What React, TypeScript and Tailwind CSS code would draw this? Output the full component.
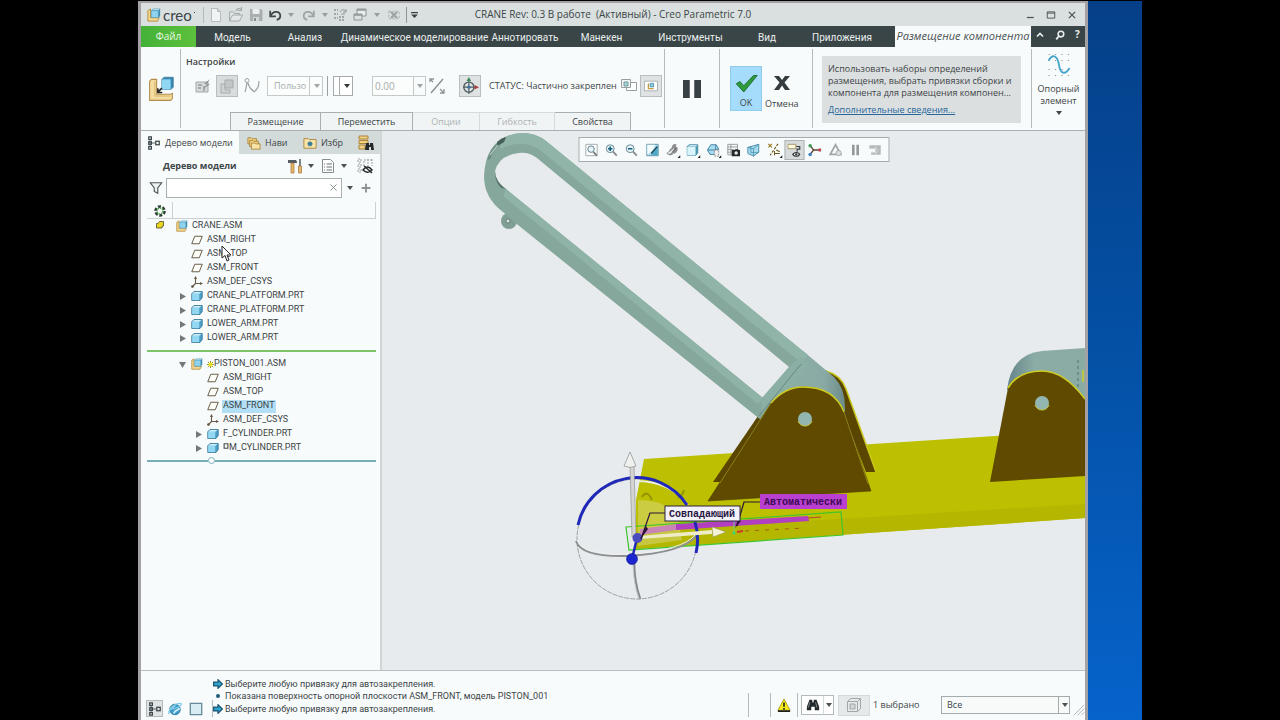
import { useState, type ReactNode } from 'react'
import clsx from 'clsx'

type TreeItem = {
  name: string
  kind: 'asm' | 'plane' | 'csys' | 'part'
  level: number
  mark?: 'new' | 'packed'
}

const MENU = [
  { label: 'Модель', width: 'w-[73px]' },
  { label: 'Анализ', width: 'w-[72px]' },
  { label: 'Динамическое моделирование', width: 'w-[147px]' },
  { label: 'Аннотировать', width: 'w-[74px]' },
  { label: 'Манекен', width: 'w-[79px]' },
  { label: 'Инструменты', width: 'w-[99px]' },
  { label: 'Вид', width: 'w-[54px]' },
  { label: 'Приложения', width: 'w-[96px]' },
]

const PANELS = [
  { label: 'Размещение', width: 'w-[91px]' },
  { label: 'Переместить', width: 'w-[92px]' },
  { label: 'Опции', width: 'w-[67px]', disabled: true },
  { label: 'Гибкость', width: 'w-[75px]', disabled: true },
  { label: 'Свойства', width: 'w-[76px]' },
]

const CRANE: TreeItem[] = [
  { name: 'CRANE.ASM', kind: 'asm', level: 0 },
  { name: 'ASM_RIGHT', kind: 'plane', level: 1 },
  { name: 'ASM_TOP', kind: 'plane', level: 1 },
  { name: 'ASM_FRONT', kind: 'plane', level: 1 },
  { name: 'ASM_DEF_CSYS', kind: 'csys', level: 1 },
  { name: 'CRANE_PLATFORM.PRT', kind: 'part', level: 1 },
  { name: 'CRANE_PLATFORM.PRT', kind: 'part', level: 1 },
  { name: 'LOWER_ARM.PRT', kind: 'part', level: 1 },
  { name: 'LOWER_ARM.PRT', kind: 'part', level: 1 },
]

const PISTON: TreeItem[] = [
  { name: 'PISTON_001.ASM', kind: 'asm', level: 1, mark: 'new' },
  { name: 'ASM_RIGHT', kind: 'plane', level: 2 },
  { name: 'ASM_TOP', kind: 'plane', level: 2 },
  { name: 'ASM_FRONT', kind: 'plane', level: 2 },
  { name: 'ASM_DEF_CSYS', kind: 'csys', level: 2 },
  { name: 'F_CYLINDER.PRT', kind: 'part', level: 2 },
  { name: 'M_CYLINDER.PRT', kind: 'part', level: 2, mark: 'packed' },
]

function Icon({ children, className = 'size-4' }: { children: ReactNode; className?: string }) {
  return (
    <svg viewBox="0 0 16 16" fill="none" aria-hidden="true" className={clsx('shrink-0', className)}>
      {children}
    </svg>
  )
}

function Caret({ className = 'text-[#4a5254]' }: { className?: string }) {
  return (
    <svg viewBox="0 0 6 4" aria-hidden="true" className={clsx('h-1 w-1.5 shrink-0', className)}>
      <path d="M0 0h6L3 4z" fill="currentColor" />
    </svg>
  )
}

/* ---------- icons ---------- */

const AsmIcon = ({ className }: { className?: string }) => (
  <Icon className={className}>
    <path d="M1 3l3-2v10h10l-2 4H1z" fill="#f3d58e" stroke="#b28a3c" />
    <path d="M5 3l2-2h8l-2 2z" fill="#c6ebf8" stroke="#3b8db0" strokeWidth=".6" />
    <path d="M5 3h8v8H5z" fill="#8fd3ee" stroke="#3b8db0" strokeWidth=".6" />
    <path d="M13 3l2-2v8l-2 2z" fill="#3f8db3" />
  </Icon>
)

const PartIcon = () => (
  <Icon className="size-3">
    <path d="M1 5l3-3h11v8l-3 4H1z" fill="#4b9fc4" stroke="#2d6f92" strokeLinejoin="round" />
    <path d="M1.500 5H11v8.500H1.500z" fill="#93d8f2" />
    <path d="M1.500 5l3-2.500H14L11 5z" fill="#cdeffb" />
  </Icon>
)

const PlaneIcon = () => (
  <Icon className="size-3">
    <path d="M5 3h10l-4 10H1z" fill="#fdfdf8" stroke="#665a46" strokeWidth="1.300" />
  </Icon>
)

const CsysIcon = () => (
  <Icon className="size-3">
    <path d="M6 1v9h9M6 10l-5 5" stroke="#665a46" strokeWidth="1.500" />
    <path d="M4 4l2-4 2 4zM12 8l4 2-4 2z" fill="#665a46" />
    <circle cx="2" cy="14" r="1.800" fill="#665a46" />
  </Icon>
)

const TreeGlyph = () => (
  <Icon className="size-3.5">
    <g stroke="#394347" strokeWidth="1.400">
      <path d="M3.500 5v6M5 8h4" strokeWidth="1" />
      <rect x="2" y="1" width="3" height="3" />
      <rect x="2" y="6.500" width="3" height="3" />
      <rect x="2" y="12" width="3" height="3" />
      <rect x="10" y="6" width="4" height="4" />
    </g>
  </Icon>
)

const Binoculars = ({ className }: { className?: string }) => (
  <Icon className={className}>
    <path d="M4 2h3l.5 3h1L9 2h3l3 8v4h-5v-4H6v4H1v-4z" fill="#23282a" />
    <path d="M4.500 5l-2 6M11 5l1.500 6" stroke="#8b9598" />
  </Icon>
)

const MsgArrow = () => (
  <Icon className="size-2.5">
    <path d="M1 5h7V1l7 7-7 7v-4H1z" fill="#2fa3cf" stroke="#17506c" strokeWidth="1.800" />
  </Icon>
)

const NewFile = () => (
  <Icon>
    <path d="M3.500 1.500h6l3 3v10h-9zM9.500 1.500v3h3" fill="#f1f4f4" stroke="#b5bbbc" />
  </Icon>
)

const OpenFile = () => (
  <Icon>
    <path d="M1.500 14V5h4l1 1.500h5V8M1.500 14l3-6h10l-3 6z" fill="#e3e7e7" stroke="#a3a9aa" />
    <path d="M8 4c1-2.500 3-3 5-2M13.500 0v3.500h-3.500" stroke="#a3a9aa" strokeWidth="1.200" />
  </Icon>
)

const SaveFile = () => (
  <Icon>
    <path d="M2 2h11l1.500 1.500V14H2z" fill="#a9afb0" />
    <path d="M4.500 2h7v5h-7z" fill="#e9eded" />
    <path d="M5 10h6v4H5z" fill="#d2d7d8" />
    <path d="M6 11h2v3H6z" fill="#868d8f" />
  </Icon>
)

const Undo = ({ color = '#3e474a', flip = false }: { color?: string; flip?: boolean }) => (
  <Icon className={clsx('size-3.5', flip && '-scale-x-100')}>
    <path d="M2.500 3v6.500H9" stroke={color} strokeWidth="2" />
    <path d="M3 9c2.500-6 10-6 11-1 .4 3-1.500 5-4 5.500" stroke={color} strokeWidth="2" />
  </Icon>
)

const Regenerate = () => (
  <Icon>
    <path d="M2 3h4M2 7h4M2 11h4M7 10h6M7 13h6" stroke="#9fa6a7" strokeWidth="2" strokeDasharray="2 1" />
    <path d="M8 5c1-3 5-3 6 0M14 2v3h-3M9 7h4" stroke="#8f9698" />
  </Icon>
)

const Windows = () => (
  <Icon>
    <path d="M5 2h9v7H5z" fill="#e9eded" stroke="#8d9496" />
    <path d="M2 7h8v6H2z" fill="#dce1e2" stroke="#8d9496" />
    <path d="M5 3h9M2 8h8" stroke="#8d9496" strokeWidth="1.500" />
  </Icon>
)

const CloseWin = () => (
  <Icon className="size-3">
    <path d="M1 3h14v10H1z" stroke="#9da4a5" strokeDasharray="3 2" />
    <path d="M4 4l8 8M12 4l-8 8" stroke="#9da4a5" strokeWidth="3" />
  </Icon>
)

const magnifier = (
  <>
    <path d="M9.500 9.500L14 14.500" stroke="#888b8c" strokeWidth="2" />
    <circle cx="6.500" cy="6.500" r="4.500" fill="#e4f3f8" stroke="#5e7c88" />
  </>
)

const VIEW_TOOLS: { title: string; more?: boolean; pressed?: boolean; art: ReactNode }[] = [
  {
    title: 'Вписать',
    art: (
      <>
        <path d="M1.500 1.500h13v13h-13z" fill="#fff" stroke="#9aa5a8" />
        <path d="M10 10l4 4.500" stroke="#777" strokeWidth="2" />
        <circle cx="7.500" cy="7" r="3.700" fill="#e4f3f8" stroke="#4e7382" />
      </>
    ),
  },
  {
    title: 'Увеличить',
    art: (
      <>
        {magnifier}
        <path d="M4 6.500h5M6.500 4v5" stroke="#16607f" strokeWidth="1.800" />
      </>
    ),
  },
  {
    title: 'Уменьшить',
    art: (
      <>
        {magnifier}
        <path d="M4 6.500h5" stroke="#16607f" strokeWidth="1.800" />
      </>
    ),
  },
  {
    title: 'Перерисовать',
    art: (
      <>
        <path d="M1.500 1.500h13v13h-13z" fill="#b4e0ec" stroke="#568ea6" />
        <path d="M2 2h9c-2 6-5 9-9 11z" fill="#f4fbfd" />
        <path d="M14 4v10H6z" fill="#4fa9c6" />
        <path d="M13.500 4l-7 8" stroke="#103c50" strokeWidth="1.400" />
      </>
    ),
  },
  {
    title: 'Параметры рендеринга',
    more: true,
    art: (
      <>
        <path d="M1 11c4 0 3-5 6-5 0-4 3-6 6-4-2 1-1 3 1 3 0 6-3 7-5 7-2 3-6 3-8-1z" fill="#8d8f90" />
        <path d="M3 12c4-1 5-4 7-5" stroke="#efefef" strokeWidth="1.800" />
        <path d="M8 10l4-4" stroke="#5d6061" strokeWidth="1.200" />
      </>
    ),
  },
  {
    title: 'Стиль отображения',
    more: true,
    art: (
      <>
        <path d="M2 4l2-2h10v9l-2 3H2z" fill="#4a96b4" stroke="#4a8ba5" />
        <path d="M2 4.500h9.500V14H2z" fill="#d9f4fc" />
        <path d="M2.500 4l2-1.500h9L12 4z" fill="#f3fcff" />
      </>
    ),
  },
  {
    title: 'Сохраненные ориентации',
    more: true,
    art: (
      <>
        <path d="M5 2h6l3 5-3 6H4L1 8z" fill="#a9ddef" stroke="#34789a" />
        <path d="M1.500 8H10l3-1M10 8l1-6" stroke="#34789a" />
        <path d="M9 8h5v7H9z" fill="#eee" stroke="#888" strokeDasharray="2 1" />
      </>
    ),
  },
  {
    title: 'Менеджер видов',
    art: (
      <>
        <path d="M1.500 1.500h11v12h-11zM1.500 4.500h11M1.500 7.500h7M1.500 10.500h5M5 1.500v12" fill="#fafafa" stroke="#8b9294" />
        <path d="M6 8h3l1-1h3l1 1h1.500v7H6z" fill="#23282a" />
        <circle cx="11" cy="11.500" r="2" fill="#e8e8e8" />
      </>
    ),
  },
  {
    title: 'Перспектива',
    art: (
      <>
        <path d="M1.500 5L14 1.500v9L8 15l-6.500-3z" fill="#a6dbee" stroke="#3e86a5" />
        <path d="M1.500 5L8 6.500 14 1.500M8 6.500V15M5 4v7l9 0" stroke="#3e86a5" strokeWidth=".8" />
      </>
    ),
  },
  {
    title: 'Фильтры отображения опор',
    more: true,
    art: (
      <>
        <path d="M1 1l4 4M5 1L1 5" stroke="#947313" strokeWidth="1.200" />
        <path d="M12 1L3 14" stroke="#6b5518" strokeWidth="1.300" strokeDasharray="3 1.500" />
        <path d="M8 9v5M8 12h6M10 8l4 2" stroke="#6b5518" strokeWidth="1.200" />
      </>
    ),
  },
  {
    title: 'Отображение аннотаций',
    pressed: true,
    art: (
      <>
        <path d="M.5 1.500h9v5h-9z" fill="#fffbe3" stroke="#a48d53" />
        <path d="M10 4h4v3h-3v3" stroke="#333b3e" strokeWidth="1.300" />
        <path d="M6 13c2-3 6-3 8 0-2 3-6 3-8 0z" fill="#fff" stroke="#222a2d" strokeWidth="1.200" />
        <circle cx="10" cy="13" r="1.300" fill="#222a2d" />
      </>
    ),
  },
  {
    title: 'Центр вращения',
    art: (
      <>
        <path d="M3 3l4 5-4 5M7 8h7" stroke="#5c4438" strokeWidth="1.600" />
        <circle cx="3" cy="3" r="2" fill="#3f9a55" />
        <circle cx="3" cy="13" r="2" fill="#397fc0" />
        <circle cx="14" cy="8" r="2" fill="#c04a55" />
      </>
    ),
  },
  {
    title: 'Моделирование',
    art: (
      <>
        <path d="M8 2l6 11H2z" stroke="#a2a6a7" strokeWidth="2" />
        <circle cx="11.500" cy="11.500" r="3" fill="#dcdfe0" stroke="#a2a6a7" />
      </>
    ),
  },
  { title: 'Пауза', art: <path d="M4 2h3v12H4zM9 2h3v12H9z" fill="#939899" /> },
  {
    title: 'Возобновить',
    art: (
      <>
        <path d="M1 2.500h13v11H3v-3h5v-4H1z" fill="#b6babb" />
        <path d="M1 6.500h7v-2l3 4-3 4v-2H3" stroke="#d9dcdd" />
      </>
    ),
  },
]

/* ---------- title and menu ---------- */

function TitleBar() {
  return (
    <header className="relative flex h-[23px] shrink-0 items-center bg-[#d9e0df]">
      <div className="flex w-[63px] items-center gap-0.5 border-r border-[#b3babb] pl-1.5">
        <AsmIcon className="size-3.5" />
        <span className="font-[Lato] text-[15px] leading-4 text-[#394347]">creo</span>
        <span className="mb-1 size-px bg-[#394347]" />
      </div>
      <div className="flex items-center gap-1 pl-1">
        <button aria-label="Создать"><NewFile /></button>
        <button aria-label="Открыть"><OpenFile /></button>
        <button aria-label="Сохранить"><SaveFile /></button>
        <button aria-label="Отменить" className="flex items-center gap-1.5"><Undo /><Caret className="text-[#969d9f]" /></button>
        <button aria-label="Повторить" className="ml-1 flex items-center gap-1.5"><Undo color="#9da4a5" flip /><Caret className="text-[#969d9f]" /></button>
        <button aria-label="Регенерировать"><Regenerate /></button>
        <button aria-label="Окна" className="flex items-center gap-1.5"><Windows /><Caret className="text-[#969d9f]" /></button>
        <button aria-label="Закрыть окно модели" className="ml-1"><CloseWin /></button>
        <button aria-label="Настроить панель" className="ml-0.5 flex h-4 items-center border-l border-[#8f9698] pl-1">
          <svg viewBox="0 0 8 7" className="h-1.5 w-[7px]" aria-hidden="true">
            <path d="M0 0h8v1.500H0zM0 3h8L4 7z" fill="#394347" />
          </svg>
        </button>
      </div>
      <h1 className="pointer-events-none absolute inset-x-0 text-center text-[10px] text-[#3c4547]">
        CRANE Rev: 0.3 В работе &nbsp;(Активный) - Creo Parametric 7.0
      </h1>
      <div className="ml-auto flex items-center gap-[11px] pr-2 text-[#4b5557]">
        <button aria-label="Свернуть"><Icon className="size-2.5"><path d="M3 12h11" stroke="currentColor" strokeWidth="2" /></Icon></button>
        <button aria-label="Развернуть"><Icon className="size-2.5"><path d="M2 3h12v10H2zM2 5h12" stroke="currentColor" strokeWidth="1.500" /></Icon></button>
        <button aria-label="Закрыть"><Icon className="size-2.5"><path d="M3 3l10 10M13 3L3 13" stroke="currentColor" strokeWidth="2" /></Icon></button>
      </div>
    </header>
  )
}

function MenuBar() {
  return (
    <nav className="flex h-[21px] shrink-0 bg-[#3a4547] text-[10px] whitespace-nowrap text-[#e9eeee]">
      <button className="w-[55px] bg-gradient-to-r from-[#43b138] to-[#5cc13c] text-[#eaf8e4]">Файл</button>
      {MENU.map(item => (
        <button key={item.label} className={clsx("flex items-center justify-center pt-px font-['Roboto',sans-serif]", item.width)}>
          {item.label}
        </button>
      ))}
      <button className="ml-auto flex w-[136px] items-center justify-center bg-[#f8fbfb] text-[11px] text-[#4a5254] italic">
        Размещение компонента
      </button>
      <div className="flex w-[54px] items-center justify-around pb-1">
        <button aria-label="Свернуть ленту"><Icon className="size-2"><path d="M2 11l6-6 6 6" stroke="currentColor" strokeWidth="3.500" /></Icon></button>
        <button aria-label="Поиск команд">
          <Icon className="size-2.5">
            <circle cx="9.500" cy="6.500" r="4.500" stroke="currentColor" strokeWidth="2.500" />
            <path d="M6 10l-4 5" stroke="currentColor" strokeWidth="3" />
          </Icon>
        </button>
        <button aria-label="Справка" className="font-bold">?</button>
      </div>
    </nav>
  )
}

/* ---------- ribbon ---------- */

function Ribbon() {
  return (
    <section className="flex h-[84px] shrink-0 border-b border-[#a9b0b2] bg-[#f8fbfb] text-[9px] text-[#3c4547]">
      <div className="my-0.5 flex w-10 shrink-0 items-center justify-center border-r border-[#b5bbbd]">
        <Icon className="size-7">
          <path d="M1.500 3.500l1-1H5.500V11h8l1-.5v3l-1 1h-12z" fill="#f5dda0" stroke="#b48d4b" strokeWidth=".6" />
          <path d="M4.500 3.500V12h9" stroke="#d2ae68" strokeWidth=".5" />
          <path d="M8.500 2.500l1.200-1.200H15V7l-1.300 1.200H8.500z" fill="#3c89b5" stroke="#2d7096" strokeWidth=".4" />
          <path d="M8.500 2.500h5v5.700h-5z" fill="#8fd7f3" />
          <path d="M8.500 7.500L6.300 9.700M6.200 7.500V10h2.500" stroke="#222" strokeWidth=".9" />
        </Icon>
      </div>

      <div className="flex min-w-0 flex-1 flex-col">
        <h2 className="pt-[7px] pl-[5px] leading-4 font-semibold">Настройки</h2>
        <div className="flex h-8 items-center pl-3.5">
          <button aria-label="Интерфейс" className="w-[21px] shrink-0">
            <Icon>
              <path d="M1 4h12v10H1z" fill="#d5d9da" stroke="#a2a8a9" />
              <path d="M3 7h4M3 10h3M9 8v5" stroke="#969c9d" strokeWidth="1.500" />
              <path d="M15 1l-6 5h3L8 11l7-5h-3z" fill="#8d9394" />
            </Icon>
          </button>
          <button aria-label="Вручную" className="flex size-[22px] shrink-0 items-center justify-center border border-[#b9bfc0] bg-[#d9dcdd]">
            <Icon>
              <path d="M2 6h4v6h5v3H2z" fill="#cfd2d3" stroke="#a5abac" />
              <path d="M6 2h8v8H6z" fill="#c2c6c7" stroke="#a5abac" />
            </Icon>
          </button>
          <button aria-label="Набор" className="mr-[7px] ml-1.5 shrink-0">
            <Icon className="size-4">
              <circle cx="3" cy="2.500" r="2" stroke="#9ba1a2" />
              <path d="M3 5c-1 4-1 7-2 9M4 5c1 4 3 7 7 9M10 14c3-2 5-6 5-11" stroke="#9ba1a2" strokeWidth="1.200" />
            </Icon>
          </button>
          <div className="relative shrink-0">
            <select aria-label="Тип соединения" disabled className="h-5 w-14 appearance-none border border-[#c4c9ca] bg-[#fbfcfc] pr-4 pl-1.5 text-[#a7adae] opacity-100">
              <option>Пользовательский</option>
            </select>
            <span className="pointer-events-none absolute top-0 right-0 flex h-5 w-3.5 items-center justify-center border-l border-[#c4c9ca]">
              <Caret className="text-[#a0a6a7]" />
            </span>
          </div>
          <span className="ml-1 h-5 border-l border-[#9ba1a2]" />
          <div className="relative ml-[5px] shrink-0">
            <select aria-label="Тип ограничения" className="h-5 w-5 appearance-none border border-[#a5abac] bg-white text-transparent" />
            <span className="pointer-events-none absolute top-0 right-0 flex h-5 w-3.5 items-center justify-center border-l border-[#a5abac]">
              <Caret className="text-[#30383a]" />
            </span>
          </div>
          <div className="ml-[19px] flex h-5 w-[54px] shrink-0 border border-[#c4c9ca]">
            <input aria-label="Смещение" disabled defaultValue="0.00" className="w-0 flex-1 bg-[#fbfcfc] pl-0.5 text-[10px] text-[#a7adae]" />
            <button aria-label="Недавние значения" className="flex w-3 items-center justify-center border-l border-[#c4c9ca]">
              <Caret className="text-[#a0a6a7]" />
            </button>
          </div>
          <button aria-label="Ориентация" className="ml-[3px] shrink-0">
            <Icon>
              <path d="M14 1L2 15" stroke="#8d9394" strokeWidth="1.500" />
              <path d="M1 4V1h4M1 1l3 3M15 11v4h-4M15 15l-4-4" stroke="#8d9394" strokeWidth="1.300" />
            </Icon>
          </button>
          <button aria-label="3D-драггер" className="ml-3.5 flex size-[22px] shrink-0 items-center justify-center border border-[#b9bfc0] bg-[#dfe2e3]">
            <Icon className="size-[18px]">
              <circle cx="7" cy="9" r="4.500" stroke="#4f5d61" strokeWidth="1.200" />
              <path d="M7 3v12M2 9h10" stroke="#4f5d61" />
              <path d="M5 3.500L7 0l2 3.500z" fill="#3c8b57" />
              <path d="M12 7l4 2-4 2z" fill="#a83d3d" />
              <circle cx="7" cy="9" r="1.500" fill="#3d6fa3" />
            </Icon>
          </button>
          <span className="ml-2 whitespace-nowrap">СТАТУС: Частично закреплен</span>
          <button aria-label="Отдельное окно" className="ml-auto shrink-0">
            <Icon>
              <path d="M5.500 4.500h10v8h-10z" fill="#fff" stroke="#999fa0" />
              <path d="M.5 1.500h9v8h-9z" fill="#f3f5f5" stroke="#999fa0" />
              <path d="M3 4h4v4H3z" fill="#a3d3d6" stroke="#6f9b9b" />
            </Icon>
          </button>
          <button aria-label="Окно сборки" className="mr-0.5 ml-[3px] flex size-[22px] shrink-0 items-center justify-center border border-[#b9bfc0] bg-[#dfe2e3]">
            <Icon className="size-3.5">
              <path d="M.5 2.500h15v11H.5z" fill="#fff" stroke="#a3a9aa" />
              <path d="M5 5v6h6" stroke="#c79a41" strokeWidth="1.500" />
              <path d="M7 5h4v4H7z" fill="#8fd0e4" stroke="#4991ab" />
            </Icon>
          </button>
        </div>
        <div className="mt-auto flex h-[18px] pl-[49px]">
          {PANELS.map(panel => (
            <button
              key={panel.label}
              disabled={panel.disabled}
              className={clsx(
                'flex items-center justify-center border-t border-r border-[#a9b0b2] bg-[#f1f4f4] first:border-l disabled:border-[#d5dadb] disabled:text-[#adb3b4]',
                panel.width,
              )}
            >
              {panel.label}
            </button>
          ))}
        </div>
      </div>

      <div className="my-0.5 flex w-14 shrink-0 items-center justify-center border-x border-[#b5bbbd]">
        <button aria-label="Пауза">
          <Icon className="size-[18px]"><path d="M0 0h6v16H0zM10 0h6v16h-6z" fill="#394043" /></Icon>
        </button>
      </div>

      <div className="my-0.5 flex w-[93px] shrink-0 items-center gap-[3px] border-r border-[#b5bbbd] pl-2.5">
        <button className="flex h-[45px] w-8 flex-col items-center justify-between border border-[#8fcdf0] bg-[#a6dcfb] pt-1">
          <Icon className="size-6">
            <path d="M1.500 8.500L4 7l2.500 2.800L13 3h2.500L6.500 14z" fill="#2f9a3c" stroke="#1d6b2c" strokeWidth=".6" />
          </Icon>
          <span className="leading-[14px]">OK</span>
        </button>
        <button className="flex h-[45px] flex-col items-center justify-between pt-[9px]">
          <Icon className="size-4"><path d="M0 1h5l3 4 3-4h5l-5.500 6.500L16 15h-5l-3-4.500L5 15H0l5.500-7.500z" fill="#353c3f" /></Icon>
          <span className="leading-[14px]">Отмена</span>
        </button>
      </div>

      <div className="my-0.5 w-[219px] shrink-0 border-r border-[#b5bbbd] py-[7px] pr-2.5 pl-[9px]">
        <div className="h-[67px] bg-[#dcdfe0] px-1.5 pt-[7px] leading-3">
          <p className="whitespace-nowrap">
            Использовать наборы определений
            <br />
            размещения, выбрать привязки сборки и
            <br />
            компонента для размещения компонен...
          </p>
          <a href="#help" className="mt-[5px] block text-[#27679b] underline">Дополнительные сведения...</a>
        </div>
      </div>

      <button className="flex w-[53px] shrink-0 flex-col items-center pt-1.5 leading-3">
        <Icon className="mb-1.5 size-6">
          <path d="M1 1h14M1 5h14M1 11h14M1 15h14" stroke="#90989a" strokeWidth=".8" strokeDasharray=".8 3.500" />
          <path d="M1 5c3-5 6-3 7 3s4 7 7 2" stroke="#45a5cb" strokeWidth="1.200" />
        </Icon>
        Опорный
        <br />
        элемент
        <Caret className="mt-1" />
      </button>
    </section>
  )
}

/* ---------- model tree ---------- */

function TreeRow({ item, open, selected, onSelect }: { item: TreeItem; open?: boolean; selected: boolean; onSelect: () => void }) {
  const indent = ['pl-[22px]', 'pl-[37px]', 'pl-[53px]'][item.level]
  return (
    <li className={clsx('flex h-[14px] items-center', indent)}>
      <span className="flex w-3 shrink-0 items-center">
        {(item.kind === 'part' || open) && (
          <svg viewBox="0 0 7 7" aria-hidden="true" className="size-[7px] text-[#72797b]">
            <path d={open ? 'M0 1h7L3.500 7z' : 'M1 0l6 3.500L1 7z'} fill="currentColor" />
          </svg>
        )}
      </span>
      {item.kind === 'asm' && <AsmIcon className="size-3" />}
      {item.kind === 'plane' && <PlaneIcon />}
      {item.kind === 'csys' && <CsysIcon />}
      {item.kind === 'part' && <PartIcon />}
      <button
        onClick={onSelect}
        className={clsx(
          "ml-[3px] flex h-[13px] items-center px-px font-['Roboto',sans-serif] text-[9px] text-[#3c4446]",
          selected && 'bg-[#b2dff5]',
        )}
      >
        {item.mark === 'new' && (
          <Icon className="size-[7px]">
            <path d="M8 0v16M0 8h16M2 2l12 12M14 2L2 14" stroke="#8d8418" strokeWidth="2" />
            <path d="M4 4h8v8H4z" fill="#ecdf1e" />
          </Icon>
        )}
        {item.mark === 'packed' && (
          <Icon className="mb-1 size-1.5"><path d="M3 2h10v12H3z" stroke="#454d4f" strokeWidth="3" /></Icon>
        )}
        {item.name}
      </button>
    </li>
  )
}

function ModelTree() {
  const [selected, setSelected] = useState('piston-3')

  return (
    <aside className="relative flex w-[241px] shrink-0 flex-col border-r-2 border-[#d0d5d7] bg-[#f8fbfb] text-[9px] text-[#3c4547]">
      <div className="flex h-[23px] bg-[#d3dada]">
        <button className="flex w-[98px] items-center gap-1 bg-[#f8fbfb] pl-1.5 whitespace-nowrap"><TreeGlyph />Дерево модели</button>
        <button className="flex w-14 items-center gap-1 pl-2 whitespace-nowrap">
          <Icon className="size-3.5">
            <path d="M1 2h4l1 1h5v6H1z" fill="#f1d283" stroke="#a98339" />
            <path d="M3 5h4l1 1h5v6H3z" fill="#f1d283" stroke="#a98339" />
            <path d="M5 8h4l1 1h5v6H5z" fill="#f8e3a9" stroke="#a98339" />
          </Icon>
          Нави
        </button>
        <button className="flex w-[50px] items-center gap-1 pl-2 whitespace-nowrap">
          <Icon className="size-3.5">
            <path d="M1 3h5l1 1h8v10H1z" fill="#f8e3a9" stroke="#a98339" />
            <path d="M8 6v6M5 9h6M6 7l4 4M10 7l-4 4" stroke="#2d7696" strokeWidth="1.200" />
          </Icon>
          Избр
        </button>
        <button aria-label="Поиск в дереве" className="ml-auto pr-1.5">
          <Icon>
            <path d="M1 1h9v3H1zM1 5.500h9v3H1zM1 10h6v4H1z" fill="#f1d283" stroke="#a98339" />
            <path d="M8 8h3v2h1V8h3l1 7h-3v-3h-2v3H7z" fill="#23282a" />
          </Icon>
        </button>
      </div>

      <div className="flex h-[23px] items-center pr-[7px] pl-[22px]">
        <h2 className="flex-1 font-bold">Дерево модели</h2>
        <button aria-label="Настройки дерева" className="flex items-center gap-[5px]">
          <Icon>
            <path d="M4 5h3v10H4z" fill="#e9b766" stroke="#9b713a" strokeWidth=".7" />
            <path d="M1 2h8l1 2v1H1z" fill="#555d60" />
            <path d="M12 1h2v7h-2z" fill="#7a8285" />
            <path d="M11.500 8h3v7h-3z" fill="#e9b766" stroke="#9b713a" strokeWidth=".7" />
          </Icon>
          <Caret />
        </button>
        <button aria-label="Показать" className="ml-1.5 flex items-center gap-[5px]">
          <Icon>
            <path d="M2.500 1.500h8l3 3v10h-11z" fill="#fff" stroke="#868d8f" />
            <path d="M4 6h1M4 9h1M4 12h1M6.500 6H12M6.500 9H12M6.500 12H12" stroke="#677073" />
          </Icon>
          <Caret />
        </button>
        <button aria-label="Скрыть элементы" className="ml-2.5">
          <Icon>
            <path d="M1 1h3v3H1zM1 6h3v3H1zM1 11h3v3H1zM7 3v6M7 2h8M11 1v7M15 1v7" stroke="#9ba2a4" strokeDasharray="2 1" />
            <path d="M6 12c3-4 6-4 9 0-3 3-6 3-9 0zM7 8l8 7" stroke="#23282a" strokeWidth="1.400" />
          </Icon>
        </button>
      </div>

      <div className="flex h-[21px] items-center gap-[3px] px-2">
        <Icon className="size-3.5"><path d="M1.500 2h13L10 8v6l-4-2V8z" fill="#eef1f1" stroke="#4c5659" strokeWidth="1.300" /></Icon>
        <div className="flex h-5 w-[176px] items-center border border-[#a9b0b2] bg-white">
          <input aria-label="Фильтр дерева" className="w-0 flex-1 px-1 outline-none" />
          <button aria-label="Очистить фильтр" className="px-1">
            <Icon className="size-[7px]"><path d="M1 1l14 14M15 1L1 15" stroke="#7c8486" strokeWidth="2" /></Icon>
          </button>
        </div>
        <button aria-label="История фильтра" className="px-0.5"><Caret /></button>
        <button aria-label="Добавить фильтр" className="ml-[3px]"><Icon className="size-2.5"><path d="M8 1v14M1 8h14" stroke="#8b9294" strokeWidth="3" /></Icon></button>
      </div>

      <div className="mx-1.5 mr-1 mt-1 flex h-[17px] border-b border-[#cbd0d2]">
        <div className="flex w-[26px] items-center justify-center border-r border-[#cbd0d2] pt-0.5">
          <Icon className="size-3">
            <circle cx="8" cy="8" r="6" stroke="#2e3a35" strokeWidth="3.500" strokeDasharray="4 2.200" />
            <circle cx="8" cy="8" r="4" stroke="#4fa04a" strokeWidth="2" strokeDasharray="2 1" />
          </Icon>
        </div>
        <div className="flex-1 border-r border-[#cbd0d2]" />
      </div>

      <div className="relative">
        <Icon className="absolute top-0.5 left-[15px] size-2">
          <path d="M1 5h3l3-4h8v9l-3 1v3H1z" fill="#e9d620" stroke="#3f3f22" strokeWidth="1.500" />
        </Icon>
        <ul className="pl-px">
          {CRANE.map((item, i) => (
            <TreeRow key={i} item={item} selected={selected === `crane-${i}`} onSelect={() => setSelected(`crane-${i}`)} />
          ))}
        </ul>
      </div>
      <div className="mx-1.5 mr-1 my-[5px] border-t-2 border-[#7cc465]" />
      <ul className="pl-px">
        {PISTON.map((item, i) => (
          <TreeRow key={i} item={item} open={i === 0} selected={selected === `piston-${i}`} onSelect={() => setSelected(`piston-${i}`)} />
        ))}
      </ul>
      <div className="mx-1.5 mr-1 mt-0.5 flex items-center">
        <span className="h-0.5 w-[61px] bg-[#76adb9]" />
        <span className="size-[7px] rounded-full border border-[#76adb9] bg-white" />
        <span className="h-0.5 flex-1 bg-[#76adb9]" />
      </div>

      <svg viewBox="0 0 11 17" aria-hidden="true" className="absolute top-[114px] left-20 h-[17px] w-[11px]">
        <path d="M1 1v12l3-2.500L6 16l2-1-2-5h4z" fill="#fff" stroke="#222" />
      </svg>
    </aside>
  )
}

/* ---------- graphics area ---------- */

function Scene() {
  return (
    <svg viewBox="382 131 703 539" preserveAspectRatio="xMidYMid slice" className="absolute inset-0 size-full" role="img" aria-label="CRANE.ASM">
      <defs>
        <linearGradient id="boss" x1="0" y1="0" x2="1" y2="0">
          <stop offset="0" stopColor="#8eb0a7" />
          <stop offset="0.750" stopColor="#8aaaa5" />
          <stop offset="1" stopColor="#6c8b88" />
        </linearGradient>
        <linearGradient id="far" x1="0" y1="0" x2="1" y2="0">
          <stop offset="0" stopColor="#66838a" />
          <stop offset="0.350" stopColor="#8aaca5" />
          <stop offset="1" stopColor="#8aaca5" />
        </linearGradient>
      </defs>

      {/* platform */}
      <path d="M644 459L1085 430v88L636 549V500z" fill="#bcc000" />
      <path d="M636 531l449-27v14L636 549z" fill="#b4b600" />
      <path d="M642 497q5-8 10 3M678 498q5-3 6-8" stroke="#969600" strokeWidth="2" fill="none" />

      {/* rear plates */}
      <path d="M713 482l45-66 12-8-50 74z" fill="#5a4600" />
      <path d="M826 371q15 4 20 18l30 83h-10l-24-62z" fill="#5a4600" />
      <path d="M826 371q15 4 20 18l30 83" stroke="#c9c71a" strokeWidth="1.500" fill="none" />

      {/* lower arm */}
      <path d="M803 351l31 26q12 12 11 34l-30 12h-54l-1-3z" fill="url(#boss)" />
      <circle cx="509" cy="221" r="8" fill="#7f9f94" />
      <path
        fillRule="evenodd"
        d="M522 133q14 0 24 8l259 212-44 67-243-195-15-13q-19-14-19-36 2-41 38-43zM537 158q-8-6-18-5-20 2-24 18 0 10 11 18l257 209 26-31z"
        fill="#86a79b"
      />
      <path d="M522 133q14 0 24 8l262 214-8 7L541 151q-10-8-22-7-10 0-18 5-4-5 5-12 7-4 16-4z" fill="#90b4a7" />
      <path d="M506 189l257 209-5 6L503 196z" fill="#8fb3a6" />
      <path d="M487 160q4-14 19-23l-2 5q-10 6-14 17z" fill="#6b8a80" />
      <path d="M497 142q4-4 9-5l-2 5-7 4z" fill="#465f59" />
      <path d="M490 155l8-10" stroke="#b9d5ca" strokeWidth="1.200" />
      <path d="M496 168q-3 12 10 21l-5-1q-8-8-5-20z" fill="#5b7870" />
      <path d="M789 367l12-10 6 8-44 56-2-22z" fill="#8cafa5" />
      <path d="M801 364l-42 52" stroke="#5e7d76" strokeWidth=".8" />
      <circle cx="508" cy="221" r="2" fill="#dfe8e7" stroke="#648078" />

      {/* front plate */}
      <path d="M708 501l63-98q14-16 32-16 31 0 41 25l27 79z" fill="#5f4a00" stroke="#4f3e00" strokeWidth=".6" />
      <path d="M771 403q14-16 32-16 31 0 41 25" stroke="#cfcd22" strokeWidth="1.500" fill="none" />
      <path d="M844 412l24 72M720 483l51-80" stroke="#a49a28" strokeWidth=".7" />
      <circle cx="805" cy="419" r="7" fill="#93b6b1" />
      <path d="M798 421q2 5 7 5t7-5" stroke="#c7c53b" fill="none" />

      {/* second support */}
      <path d="M1007 390q4-36 35-39l43-3v52z" fill="url(#far)" />
      <path d="M1078 360v35" stroke="#536f70" strokeDasharray="3 3" />
      <path d="M990 482l18-94q10-17 34-17 22 0 43 28v77z" fill="#5f4a00" />
      <path d="M1008 388q10-17 34-17 22 0 43 28M1083 370v12" stroke="#cfcd22" strokeWidth="1.500" fill="none" />
      <circle cx="1042" cy="403" r="7" fill="#93b6b1" />
      <path d="M1035 405q2 5 7 5t7-5" stroke="#c7c53b" fill="none" />

      {/* piston preview */}
      <path d="M638 500q30 0 40 18l4 22-44 6z" fill="#d7d577" opacity=".55" />
      <path d="M640 529l36-5v6l-36 5z" fill="#c985b5" />
      <path d="M676 524l132-8 1 5-133 9z" fill="#b23fc0" />
      <path d="M808 518l13-1" stroke="#b5462e" />
      <path d="M745 531l60-3" stroke="#a06018" strokeDasharray="4 6" />
      <path d="M626 527l215-15 2 23-214 15z" fill="none" stroke="#3fc42b" strokeWidth="1.200" />

      {/* dragger */}
      <circle cx="637" cy="539" r="60" fill="none" stroke="#8a8e91" strokeWidth=".8" strokeDasharray="5 1" />
      <path d="M576 541q5 16 50 15 58-3 71-21" stroke="#8d8f91" strokeWidth="2" fill="none" />
      <path d="M577 540q5 15 50 14 56-3 69-20" stroke="#eff0ef" fill="none" />
      <path d="M634 562q0 20 6 37" stroke="#85888a" strokeWidth="2.500" fill="none" />
      <path d="M633 562q0 20 6 37" stroke="#d7d9da" strokeWidth=".8" fill="none" />
      <path d="M636 481q34 0 52 24" stroke="#eceee8" strokeWidth="2" fill="none" />
      <path d="M578 525a60 60 0 0 1 109-20M695 522a60 60 0 0 1 1 31" stroke="#2028b8" strokeWidth="3" fill="none" />
      <path d="M630 465h4l2 72h-4z" fill="#d4d4d0" stroke="#8a8c8c" strokeWidth=".6" />
      <path d="M630 452l6 14q-6 3-12 0z" fill="#f0f0ee" stroke="#888b8c" strokeWidth=".7" />
      <path d="M640 536l72-6v4l-72 5z" fill="#eeedc7" />
      <path d="M712 527l14 5-13 5z" fill="#f4f2d9" stroke="#9b9a62" strokeWidth=".6" />
      <path d="M638 534l-6 25" stroke="#2028b8" strokeWidth="2.500" />
      <circle cx="637.500" cy="538" r="5" fill="#4a4cbd" />
      <circle cx="632" cy="559" r="5.500" fill="#1c26d0" stroke="#111a86" strokeWidth=".6" />
      <path d="M734 532v-11" stroke="#6bcf8e" />
      <circle cx="734" cy="533" r="1.500" fill="#35d67c" />
      <path d="M737 532l6-1" stroke="#d2392a" strokeWidth="2" />

      {/* constraint labels */}
      <path d="M665 513h-15l-9 26M760 502h-16l-7 24" stroke="#2a1438" strokeWidth="1.200" fill="none" />
      <path d="M640 540l6-14 2 3zM735 528l3-8 3 1z" fill="#2a1438" />
      <rect x="665" y="506" width="75" height="15" fill="#f3f1fa" stroke="#2b2340" />
      <rect x="760" y="494" width="87" height="15" fill="#b93fd0" />
      <g className="text-[10px] font-bold" fontFamily='"Liberation Mono", monospace'>
        <text x="669" y="517" fill="#1f1340">Совпадающий</text>
        <text x="764" y="505" fill="#3b0a52">Автоматически</text>
      </g>
    </svg>
  )
}

function Viewport() {
  return (
    <main className="relative min-w-0 flex-1 overflow-hidden bg-[#e7ebee]">
      <Scene />
      <div className="absolute top-1.5 left-1/2 flex h-[25px] w-[311px] -translate-x-1/2 items-center justify-between border border-[#a4abad] bg-[#f8fbfb] px-0.5">
        {VIEW_TOOLS.map(tool => (
          <button
            key={tool.title}
            aria-label={tool.title}
            className={clsx('relative flex size-5 items-center justify-center', tool.pressed && 'border border-[#aeb4b6] bg-[#d8dbdc]')}
          >
            <Icon className="size-3.5">{tool.art}</Icon>
            {tool.more && (
              <svg viewBox="0 0 3 3" aria-hidden="true" className="absolute right-0.5 bottom-0.5 size-[3px]">
                <path d="M3 0v3H0z" fill="#222" />
              </svg>
            )}
          </button>
        ))}
      </div>
    </main>
  )
}

/* ---------- status bar ---------- */

function StatusBar() {
  return (
    <footer className="flex h-[50px] shrink-0 items-end border-t border-[#b9bfc1] bg-[#f8fbfb] text-[9px] text-[#3c4547]">
      <div className="flex items-center gap-[5px] pb-[3px] pl-[5px]">
        <button aria-label="Навигатор" className="flex size-[17px] items-center justify-center border border-[#b4babc] bg-[#dfe3e4]"><TreeGlyph /></button>
        <button aria-label="Браузер">
          <Icon className="size-3.5">
            <circle cx="8" cy="8.500" r="6" fill="#3f9cc8" stroke="#2b799e" />
            <path d="M3 8c2-1 2-3 5-4M7 13c0-4 5-3 6-6" stroke="#d5f0fa" strokeWidth="2" />
            <path d="M1 14C0 8 10 0 15 2c0 4-6 5-10 6" stroke="#7cc9e8" strokeWidth="1.500" />
          </Icon>
        </button>
        <button aria-label="Полный экран" className="pl-0.5">
          <Icon className="size-3.5"><path d="M1.500 1.500h13v13h-13z" fill="#d8ecf3" stroke="#658b9b" strokeWidth="1.500" /></Icon>
        </button>
        <span className="ml-1 h-[17px] border-l border-[#b4babc]" />
      </div>
      <ul className="min-w-0 flex-1 self-start pt-1.5 font-['Roboto',sans-serif] leading-3 whitespace-nowrap">
        <li className="flex h-[13px] items-center gap-0.5"><MsgArrow />Выберите любую привязку для автозакрепления.</li>
        <li className="flex h-3 items-center gap-0.5">
          <span className="flex w-2.5 justify-center"><span className="size-1 rounded-full bg-[#1d5b78]" /></span>
          Показана поверхность опорной плоскости ASM_FRONT, модель PISTON_001
        </li>
        <li className="flex h-[13px] items-center gap-0.5"><MsgArrow />Выберите любую привязку для автозакрепления.</li>
      </ul>
      <div className="mb-0.5 flex h-6 items-center pb-0.5">
        <span className="h-6 border-l border-[#b4babc]" />
        <span className="ml-[21px] h-6 border-l border-[#b4babc]" />
        <button aria-label="Предупреждения" className="mx-1.5">
          <Icon className="size-3.5">
            <path d="M8 1l7 13H1z" fill="#f5e81b" stroke="#a59d28" />
            <path d="M8 5v5M8 11.500v2M1 15h14" stroke="#20201a" strokeWidth="1.800" />
          </Icon>
        </button>
        <span className="mr-[3px] h-6 border-l border-[#b4babc]" />
        <div className="flex h-[20px] border border-[#b4babc] bg-white">
          <button aria-label="Найти" className="w-[21px] pl-1"><Binoculars className="size-3.5" /></button>
          <button aria-label="Параметры поиска" className="flex w-2.5 items-center justify-center border-l border-[#d5dadb]"><Caret /></button>
        </div>
        <button aria-label="Выбор геометрии" className="ml-1 flex h-[21px] w-8 items-center justify-center border border-[#d5dadb] bg-[#e6e9ea]">
          <Icon>
            <path d="M1.500 4.500h10v10h-10zM1.500 4.500l3-3h10v10l-3 3M11.500 4.500l3-3" stroke="#a1a8aa" />
            <path d="M4 7h5v5H4z" fill="#d2d6d7" stroke="#a1a8aa" />
          </Icon>
        </button>
        <span className="ml-[3px] w-[68px]">1 выбрано</span>
        <div className="relative">
          <select aria-label="Фильтр выбора" className="h-[18px] w-[129px] appearance-none border border-[#a4abad] bg-[#f8fafa] pl-[5px]">
            <option>Все</option>
            <option>Геометрия</option>
            <option>Опоры</option>
          </select>
          <span className="pointer-events-none absolute top-0 right-0 flex h-[18px] w-3 items-center justify-center border-l border-[#a4abad]"><Caret /></span>
        </div>
        <Icon className="ml-[3px] size-3 self-end"><path d="M15 1L1 15M15 6l-9 9M15 11l-4 4" stroke="#9ea5a7" /></Icon>
      </div>
    </footer>
  )
}

export default function App() {
  return (
    <div className="flex h-screen justify-center bg-black px-[138px] pt-px font-['Open_Sans','Noto_Sans',sans-serif]">
      <div className="flex min-w-0 flex-1 flex-col overflow-hidden border-x-[3px] border-t-2 border-[#a3a1a3]">
        <TitleBar />
        <MenuBar />
        <Ribbon />
        <div className="flex min-h-0 flex-1">
          <ModelTree />
          <Viewport />
        </div>
        <StatusBar />
      </div>
      <div className="w-[54px] shrink-0 bg-gradient-to-b from-[#053f88] via-[#0451a6] to-[#0663cb]" />
    </div>
  )
}
